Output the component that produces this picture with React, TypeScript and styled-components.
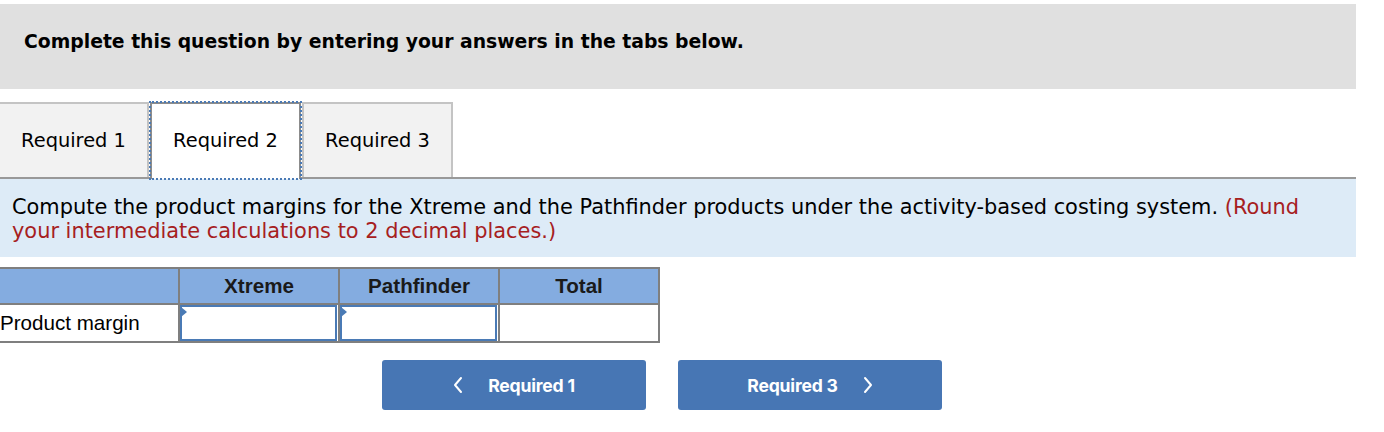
import styled, { createGlobalStyle } from "styled-components"

const GlobalStyle = createGlobalStyle`
body {
  margin: 0;
  background: #ffffff;
  font-family: "DejaVu Sans", Verdana, sans-serif;
}
`

const Page = styled.div`
width: 1356px;
padding-top: 4px;
`

const Banner = styled.div`
background-color: #e0e0e0;
height: 85px;
box-sizing: border-box;
display: flex;
align-items: center;
padding: 0 0 10px 24px;
font-size: 18.8px;
font-weight: bold;
color: #000;
`

const TabBar = styled.div`
display: flex;
margin-top: 13px;
border-bottom: 2px solid #999999;
height: 75px;
`

const Tab = styled.div<{ $active?: boolean }>`
width: 151px;
height: ${p => (p.$active ? "77px" : "75px")};
box-sizing: border-box;
display: flex;
align-items: center;
justify-content: center;
font-size: 19.4px;
color: #000;
background-color: ${p => (p.$active ? "#ffffff" : "#f2f2f2")};
border: 2px solid ${p => (p.$active ? "#8c8c8c" : "#c4c4c4")};
border-bottom: none;
outline: ${p => (p.$active ? "2px dotted #4a7ab5" : "none")};
outline-offset: -1px;
margin-right: 1px;
padding-bottom: ${p => (p.$active ? "2px" : "0")};
z-index: ${p => (p.$active ? 1 : 0)};
&:first-child {
  border-left: none;
  width: 149px;
}
`

const Prompt = styled.div`
background-color: #ddebf7;
padding: 16px 12px 14px;
font-size: 20.9px;
line-height: 24px;
color: #000;
`

const Hint = styled.span`
color: #a6201e;
`

const Grid = styled.table`
margin-top: 10px;
border-collapse: collapse;
font-family: "Liberation Sans", Arial, sans-serif;
font-size: 20.6px;
`

const HeadCell = styled.th`
background-color: #84ace0;
border: 2px solid #7f7f7f;
width: 158px;
height: 34px;
font-weight: bold;
color: #1a1a1a;
padding: 0;
&:first-child {
  width: 178px;
  border-left: none;
}
`

const LabelCell = styled.td`
border: 2px solid #7f7f7f;
border-left: none;
height: 36px;
padding: 0;
color: #000;
`

const InputCell = styled.td`
border: 2px solid #7f7f7f;
padding: 0 1px 0 0;
height: 36px;
`

const EntryBox = styled.div`
position: relative;
height: 36px;
box-sizing: border-box;
border: 2px solid #4a7ab5;
background: #fff;
&::before {
  content: "";
  position: absolute;
  left: -1px;
  top: 0;
  border-top: 5px solid transparent;
  border-bottom: 5px solid transparent;
  border-left: 6px solid #4a7ab5;
}
`

const NavRow = styled.div`
display: flex;
gap: 32px;
margin-top: 17px;
padding-left: 382px;
`

const NavButton = styled.button`
width: 264px;
height: 50px;
background-color: #4776b4;
border: none;
border-radius: 3px;
color: #ffffff;
font-family: Inter, Roboto, sans-serif;
font-size: 17.6px;
font-weight: 700;
letter-spacing: -0.2px;
display: flex;
align-items: center;
justify-content: center;
gap: 25px;
cursor: pointer;
`

const Chevron = ({ dir }: { dir: "left" | "right" }) => (
    <svg width="10" height="18" viewBox="0 0 10 18" fill="none">
        <path
            d={dir === "left" ? "M8 2 L2 9 L8 16" : "M2 2 L8 9 L2 16"}
            stroke="#fff"
            strokeWidth="2"
            strokeLinecap="round"
            strokeLinejoin="round"
        />
    </svg>
)

const App = () => {
    return (
        <Page>
            <GlobalStyle />
            <Banner>Complete this question by entering your answers in the tabs below.</Banner>
            <TabBar>
                <Tab>Required 1</Tab>
                <Tab $active>Required 2</Tab>
                <Tab>Required 3</Tab>
            </TabBar>
            <Prompt>
                Compute the product margins for the Xtreme and the Pathfinder products under the activity-based costing system.{" "}
                <Hint>(Round your intermediate calculations to 2 decimal places.)</Hint>
            </Prompt>
            <Grid>
                <thead>
                    <tr>
                        <HeadCell></HeadCell>
                        <HeadCell>Xtreme</HeadCell>
                        <HeadCell>Pathfinder</HeadCell>
                        <HeadCell>Total</HeadCell>
                    </tr>
                </thead>
                <tbody>
                    <tr>
                        <LabelCell>Product margin</LabelCell>
                        <InputCell><EntryBox /></InputCell>
                        <InputCell><EntryBox /></InputCell>
                        <InputCell></InputCell>
                    </tr>
                </tbody>
            </Grid>
            <NavRow>
                <NavButton><Chevron dir="left" />Required 1</NavButton>
                <NavButton>Required 3<Chevron dir="right" /></NavButton>
            </NavRow>
        </Page>
    )
}

export default App
